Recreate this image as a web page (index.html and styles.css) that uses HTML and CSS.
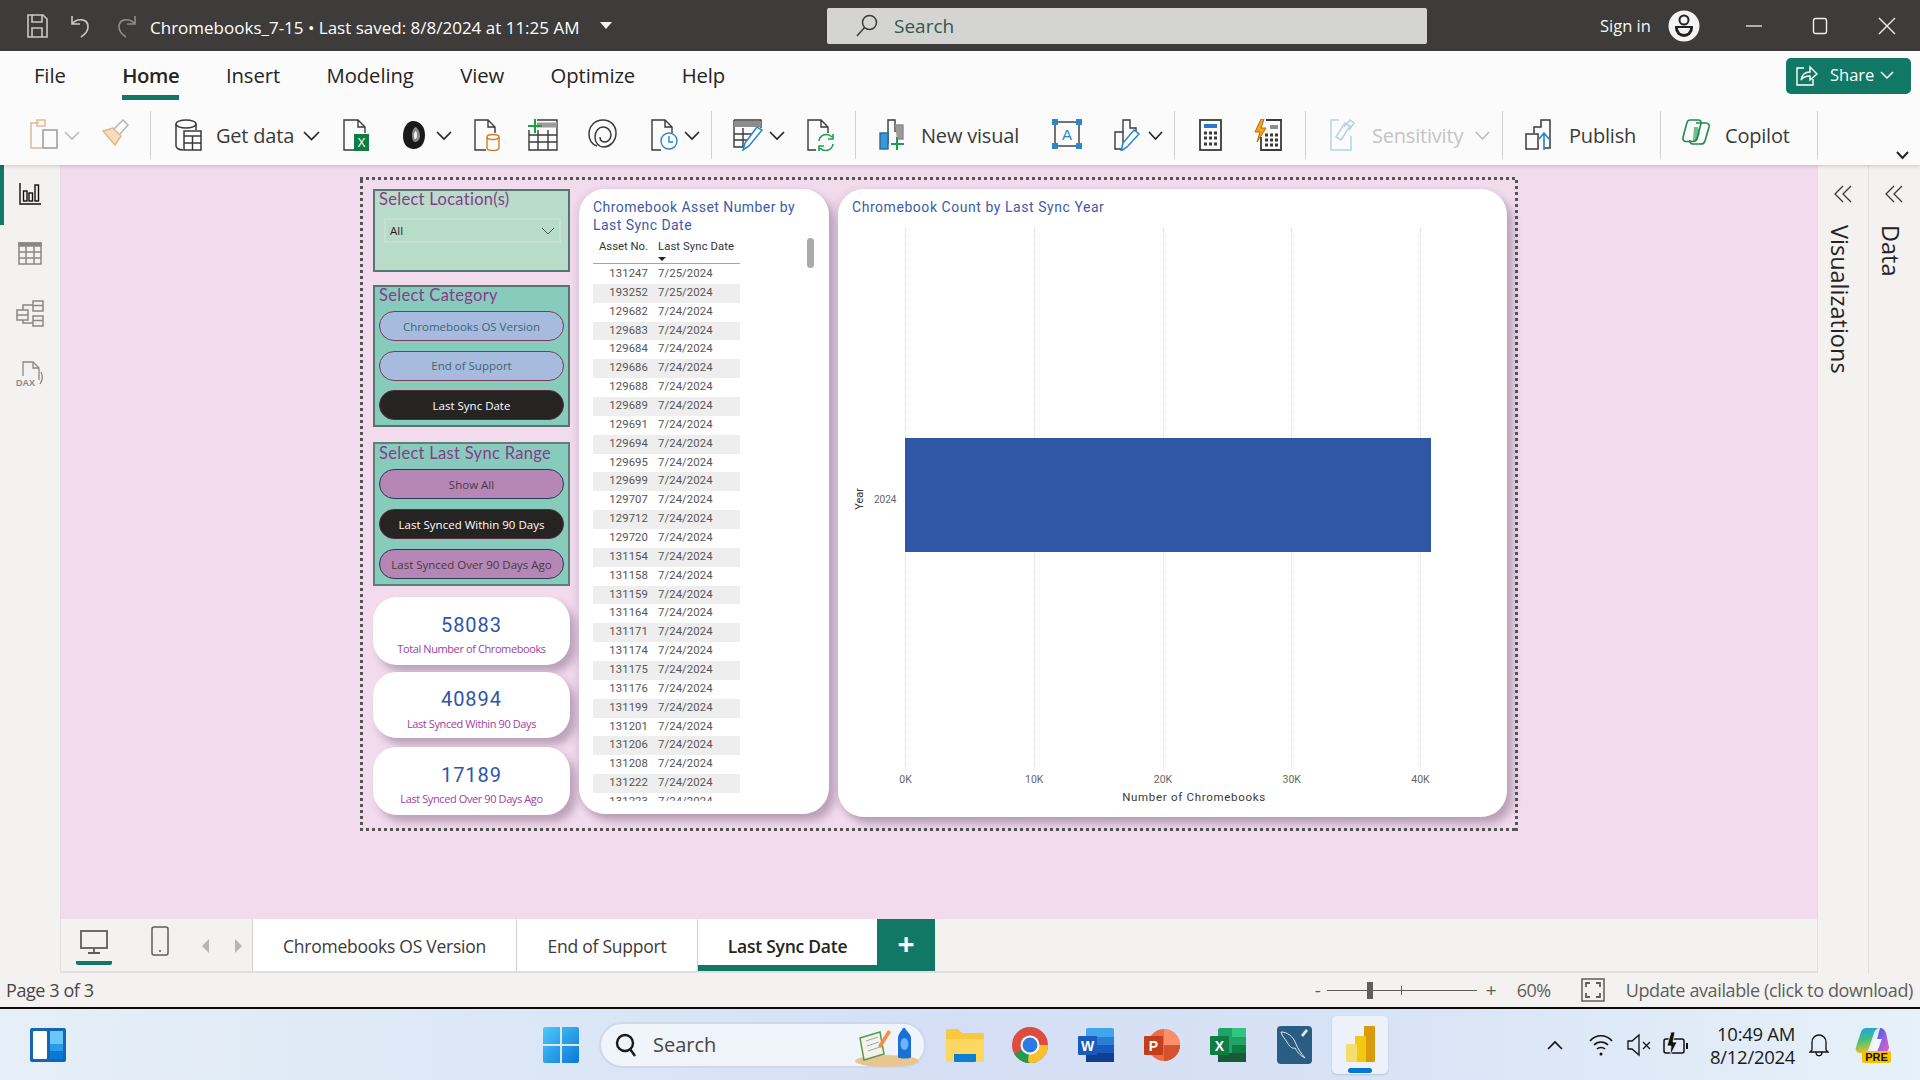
FILE: index.html
```html
<!DOCTYPE html>
<html lang="en">
<head>
<meta charset="utf-8">
<title>Power BI Desktop</title>
<link rel="stylesheet" href="styles.css">
</head>
<body>
<div class="app">
  <header class="titlebar">
    <svg class="ml27" width="21" height="24" viewBox="0 0 21 24" fill="none" stroke="#c8c8c8" stroke-width="1.6"><path d="M1 1h15l4 4v18H1z"/><path d="M5 1v7h10V1M5 23v-9h10v9"/></svg>
    <svg class="ml22" width="22" height="24" viewBox="0 0 22 24" fill="none" stroke="#c8c8c8" stroke-width="1.6"><path d="M2 2v8h8M2 10c5-6 16-6 16 3 0 5-4 8-7 10"/></svg>
    <svg class="ml23 dim" width="22" height="24" viewBox="0 0 22 24" fill="none" stroke="#8c8c8a" stroke-width="1.6"><path d="M20 2v8h-8M20 10c-5-6-16-6-16 3 0 5 4 8 7 10"/></svg>
    <span class="doc-title">Chromebooks_7-15 • Last saved: 8/8/2024 at 11:25 AM</span>
    <span class="caret-down"></span>
    <div class="searchbox">
      <svg width="24" height="24" viewBox="0 0 24 24" fill="none" stroke="#3b3a39" stroke-width="1.5"><circle cx="14.5" cy="8.5" r="7"/><path d="M9.5 13.5 2 22"/></svg>
      <span>Search</span>
    </div>
    <span class="signin">Sign in</span>
    <svg class="ml17" width="32" height="32" viewBox="0 0 32 32"><circle cx="16" cy="16" r="15.5" fill="#f4f4f4"/><circle cx="16" cy="10" r="4.5" fill="none" stroke="#222" stroke-width="2"/><path d="M7 16h18v2a9 9 0 0 1-18 0z" fill="#222"/><path d="M10 18h12a6 6 0 0 1-12 0z" fill="#f4f4f4"/></svg>
    <div class="winctl">
      <svg width="16" height="16" viewBox="0 0 16 16" stroke="#eee" stroke-width="1.3" fill="none"><path d="M0 8h16"/></svg>
      <svg width="16" height="18" viewBox="0 0 16 18" stroke="#eee" stroke-width="1.4" fill="none"><rect x="1.5" y="1.5" width="13" height="15" rx="2"/></svg>
      <svg width="18" height="18" viewBox="0 0 18 18" stroke="#eee" stroke-width="1.4" fill="none"><path d="M1 1l16 16M17 1 1 17"/></svg>
    </div>
  </header>

  <section class="ribbon">
    <nav class="tabs">
      <span class="tab first">File</span>
      <span class="tab active">Home</span>
      <span class="tab">Insert</span>
      <span class="tab">Modeling</span>
      <span class="tab">View</span>
      <span class="tab">Optimize</span>
      <span class="tab">Help</span>
      <button class="share">
        <svg width="24" height="24" viewBox="0 0 24 24" fill="none" stroke="#fff" stroke-width="1.4"><path d="M9 5H2v17h16v-6"/><path d="M6 17c1-6 5-8 9-8V4l7 7-7 6v-4c-4 0-7 1-9 4z"/></svg>
        <span>Share</span>
        <svg width="14" height="10" viewBox="0 0 14 10" fill="none" stroke="#fff" stroke-width="1.5"><path d="m1 2 6 6 6-6"/></svg>
      </button>
    </nav>
    <div class="tools">
      <svg class="ml30 dim4" width="28" height="30" viewBox="0 0 28 30" fill="none" stroke-width="1.5"><path d="M9 4H1v25h11" stroke="#e2b98c"/><rect x="7" y="1" width="8" height="6" stroke="#e2b98c"/><rect x="13" y="11" width="14" height="18" stroke="#9a9a9a"/></svg>
      <svg class="ml6 chev muted" width="16" height="10" viewBox="0 0 16 10"><path d="m1 1 7 7 7-7"/></svg>
      <svg class="ml20" width="30" height="30" viewBox="0 0 30 30" fill="none" stroke-width="1.5"><path d="M3 12 15 26l6-9-8-8z" fill="#f5dcc0" stroke="#e2b98c"/><path d="m14 10 9-9 5 5-8 9" stroke="#b5b5b5"/></svg>
      <i class="sep ml20"></i>
      <svg class="ml24" width="27" height="32" viewBox="0 0 27 32" fill="none" stroke="#3b3a39" stroke-width="1.5"><ellipse cx="11" cy="5" rx="10" ry="4"/><path d="M1 5v22c0 2 3 4 7 4M21 5v6"/><rect x="9" y="12" width="17" height="19" fill="#fff"/><path d="M9 17h17M9 24h17M17.500 17v14"/></svg>
      <span class="rt ml14 w80">Get data</span>
      <svg class="ml7 chev" width="17" height="10" viewBox="0 0 17 10"><path d="m1 1 7.500 7.500L16 1"/></svg>
      <svg class="ml23" width="27" height="32" viewBox="0 0 27 32" fill="none" stroke="#3b3a39" stroke-width="1.4"><path d="M11 31H1V1h14l7 7v6M15 1v7h7"/><rect x="11" y="15" width="15" height="17" fill="#107c41" stroke="none"/><text x="18.500" y="28" class="ic-txt" font-size="12" fill="#fff" stroke="none" text-anchor="middle">X</text></svg>
      <svg class="ml32" width="24" height="32" viewBox="0 0 24 32"><path d="M12 2c7 1 11 6 11 14 0 9-5 14-11 14C5 30 1 25 1 17 1 8 6 1 12 2z" fill="#1a1a1a"/><path d="M14 8c3 3 4 6 4 9s-2 6-5 6c-2 0-3-3-3-7s2-8 4-8z" fill="#8a8a8a"/><path d="M14 12c1 2 1 3 1 5s-1 3-2 3-1-2-1-4 1-4 2-4z" fill="#eee"/></svg>
      <svg class="ml10 chev" width="16" height="10" viewBox="0 0 16 10"><path d="m1 1 7 7 7-7"/></svg>
      <svg class="ml22" width="26" height="32" viewBox="0 0 26 32" fill="none" stroke-width="1.4"><path d="M12 31H1V1h13l7 7v6M14 1v7h7" stroke="#3b3a39"/><ellipse cx="19" cy="18" rx="6" ry="2.500" stroke="#d97a1d"/><path d="M13 18v11c0 1.500 3 2.500 6 2.500s6-1 6-2.500V18" stroke="#d97a1d"/></svg>
      <svg class="ml28" width="30" height="32" viewBox="0 0 30 32" fill="none" stroke="#3b3a39" stroke-width="1.4"><path d="M9 1h20v30H1V11"/><path d="M9 6h20" stroke="#9a9a9a" stroke-width="5"/><path d="M1 16h28M1 23h28M10 11v20M20 11v20"/><path d="M7 0v14M0 7h14" stroke="#1f9e4a" stroke-width="2"/></svg>
      <svg class="ml30" width="29" height="30" viewBox="0 0 29 30" fill="none" stroke="#3b3a39" stroke-width="1.5"><path d="M9 27C3 25 1 20 1 15 1 7 7 1 15 1s13 6 13 13c0 9-7 14-12 14-6 0-9-5-9-10 0-6 4-10 8-10s8 3 8 8c0 4-3 7-6 7s-5-2-5-5"/></svg>
      <svg class="ml34" width="27" height="32" viewBox="0 0 27 32" fill="none" stroke-width="1.4"><path d="M10 31H1V1h13l7 7v6M14 1v7h7" stroke="#3b3a39"/><circle cx="18" cy="22" r="8" stroke="#2b88c8"/><path d="M18 17v6h4" stroke="#2b88c8"/></svg>
      <svg class="ml6 chev" width="16" height="10" viewBox="0 0 16 10"><path d="m1 1 7 7 7-7"/></svg>
      <i class="sep ml11"></i>
      <svg class="ml21" width="30" height="32" viewBox="0 0 30 32" fill="none" stroke="#3b3a39" stroke-width="1.4"><path d="M1 1h27v8M1 1v27h12"/><path d="M1 5h27" stroke="#8c8c8c" stroke-width="6"/><path d="M1 15h18M1 21h13M10 9v19"/><path d="m10 31 2-7L24 8l5 3-13 16z" fill="#fff" stroke="#2b88c8" stroke-width="1.600"/></svg>
      <svg class="ml6 chev" width="16" height="10" viewBox="0 0 16 10"><path d="m1 1 7 7 7-7"/></svg>
      <svg class="ml22" width="28" height="32" viewBox="0 0 28 32" fill="none" stroke-width="1.4"><path d="M9 31H1V1h13l7 7v6M14 1v7h7" stroke="#3b3a39"/><path d="M12 22a7.500 7.500 0 0 1 13-4m1-3v5h-5" stroke="#1f9e4a" stroke-width="1.600"/><path d="M26 25a7.500 7.500 0 0 1-13 4m-1 3v-5h5" stroke="#1f9e4a" stroke-width="1.600"/></svg>
      <i class="sep ml20"></i>
      <svg class="ml23" width="26" height="32" viewBox="0 0 26 32" fill="none" stroke-width="1.4"><path d="M9 25V1h7v12" stroke="#3b3a39"/><path d="M16 6h8v14h-6" stroke="#8c8c8c" fill="#9a9a9a"/><rect x="1" y="14" width="8" height="16" fill="#3f95d8" stroke="#1d6aa8"/><path d="M18 18v13M12 25h13" stroke="#1f9e4a" stroke-width="2"/></svg>
      <span class="rt ml16 w99">New visual</span>
      <svg class="ml32" width="30" height="30" viewBox="0 0 30 30" fill="none"><rect x="3" y="3" width="24" height="24" stroke="#3b3a39" stroke-width="1.4"/><path d="M0 0h6v6H0zM24 0h6v6h-6zM0 24h6v6H0zM24 24h6v6h-6z" fill="#2b88c8"/><text x="15" y="21" class="ic-txt" font-size="15" fill="#2b88c8" text-anchor="middle">A</text></svg>
      <svg class="ml32" width="26" height="32" viewBox="0 0 26 32" fill="none" stroke-width="1.4"><path d="M8 30H1V13h8V1h7v8h6v6" stroke="#3b3a39"/><path d="M9 13v17" stroke="#3b3a39"/><path d="m7 32 2-8L20 11l5 4-12 13z" fill="#fff" stroke="#2b88c8" stroke-width="1.600"/></svg>
      <svg class="ml8 chev" width="15" height="10" viewBox="0 0 15 10"><path d="m1 1 6.500 7L14 1"/></svg>
      <i class="sep ml11"></i>
      <svg class="ml24" width="23" height="32" viewBox="0 0 23 32" fill="none" stroke="#3b3a39" stroke-width="1.800"><rect x="1" y="1" width="21" height="30"/><path d="M5 7h13" stroke="#2b78c8" stroke-width="4"/><path d="M5 14h3M10 14h3M15 14h3M5 19h3M10 19h3M15 19h3M5 25h3M10 25h3M15 25h3" stroke-width="3"/></svg>
      <svg class="ml32" width="28" height="32" viewBox="0 0 28 32" fill="none" stroke="#3b3a39" stroke-width="1.800"><path d="M12 1h15v30H7V18"/><path d="M16 8h8" stroke="#8c8c8c" stroke-width="4"/><path d="M11 16h3M16 16h3M21 16h3M11 21h3M16 21h3M21 21h3M11 26h3M16 26h3M21 26h3" stroke-width="3"/><path d="M7 0 1 13h5l-3 10 9-14H7l3-9z" fill="#f4a521" stroke="#c4620a" stroke-width="1"/></svg>
      <i class="sep ml23"></i>
      <svg class="ml24" width="25" height="32" viewBox="0 0 25 32" fill="none" stroke="#b6d3e6" stroke-width="1.500"><path d="M9 1H1v30h20V17"/><path d="m6 18 9-14 5 3-9 14z"/><path d="m14 8 6-7 4 3-5 7"/></svg>
      <span class="rt ml17 w93 off">Sensitivity</span>
      <svg class="ml10 chev muted" width="15" height="10" viewBox="0 0 15 10"><path d="m1 1 6.500 7L14 1"/></svg>
      <i class="sep ml12"></i>
      <svg class="ml22" width="27" height="32" viewBox="0 0 27 32" fill="none" stroke="#3b3a39" stroke-width="1.500"><path d="M9 14V8h7V1h9v28h-6"/><rect x="1" y="15" width="12" height="15"/><path d="M19 31V15m-5 5 5-6 5 6" stroke="#2b88c8" stroke-width="1.700"/></svg>
      <span class="rt ml17 w66">Publish</span>
      <i class="sep ml25"></i>
      <svg class="ml21" width="28" height="26" viewBox="0 0 28 26" fill="none" stroke="#1f8a4c" stroke-width="1.600"><path d="M12 8h4l2 6-3 8h-4z" fill="#6fbf8f" stroke="none"/><path d="M8 1h8c2.500 0 3.500 1.500 3 3.500l-4 15c-.5 2-2 3-4 3H4c-2.500 0-3.500-2-3-4L5 3.500C5.500 2 6.500 1 8 1z"/><path d="M14 4h10c2.500 0 3.500 2 3 4l-4 14c-.5 2-2 3-4 3h-8c-2.500 0-3.500-2-3-4"/></svg>
      <span class="rt ml15 w68">Copilot</span>
      <i class="sep ml24"></i>
      <svg class="collapse" width="13" height="9" viewBox="0 0 13 9" fill="none" stroke="#252423" stroke-width="2"><path d="m1 1 5.500 6L12 1"/></svg>
    </div>
  </section>

  <main class="workspace">
    <aside class="rail">
      <div class="rail-item on"><svg width="22" height="22" viewBox="0 0 22 22" fill="none" stroke="#111" stroke-width="1.400"><path d="M1 0v21h21"/><rect x="4.500" y="8" width="3.500" height="10"/><rect x="10" y="10" width="3.500" height="8"/><rect x="16" y="2" width="3.500" height="16"/></svg></div>
      <div class="rail-item"><svg width="24" height="24" viewBox="0 0 24 24" fill="none" stroke="#8a8886" stroke-width="1.500"><rect x="1" y="1" width="22" height="21"/><path d="M1 1h22v3H1z" fill="#8a8886"/><path d="M1 10h22M1 16h22M8 4v18M16 4v18"/></svg></div>
      <div class="rail-item"><svg width="28" height="28" viewBox="0 0 28 28" fill="none" stroke="#8a8886" stroke-width="1.500"><rect x="1" y="10" width="11" height="10"/><path d="M1 15h11"/><rect x="17" y="1" width="10" height="10"/><path d="M17 5.500h10"/><rect x="17" y="16" width="10" height="10"/><path d="M17 20.500h10M7 10V5h10M7 20v3h10"/></svg></div>
      <div class="rail-item"><svg width="28" height="28" viewBox="0 0 28 28" fill="none" stroke="#8a8886" stroke-width="1.300"><path d="M7 16V2h10l6 6v12"/><path d="M17 2v6h6M25 12c2 4 1 9-1 12"/><text x="0" y="26" class="ic-txt" font-size="9" fill="#8a8886" stroke="none" font-weight="700">DAX</text></svg></div>
    </aside>

    <div class="center">
      <div class="canvas">
        <div class="report">
          <div class="col-left">
            <section class="slicer loc">
              <h3>Select Location(s)</h3>
              <div class="dropdown"><span>All</span><svg width="14" height="8" viewBox="0 0 14 8" fill="none" stroke="#555" stroke-width="1"><path d="m1 1 6 6 6-6"/></svg></div>
            </section>
            <section class="slicer cat">
              <h3>Select Category</h3>
              <div class="pill blue">Chromebooks OS Version</div>
              <div class="pill blue">End of Support</div>
              <div class="pill black">Last Sync Date</div>
            </section>
            <section class="slicer range">
              <h3>Select Last Sync Range</h3>
              <div class="pill plum">Show All</div>
              <div class="pill black">Last Synced Within 90 Days</div>
              <div class="pill plum">Last Synced Over 90 Days Ago</div>
            </section>
            <section class="kpi k1"><b>58083</b><small>Total Number of Chromebooks</small></section>
            <section class="kpi k2"><b>40894</b><small>Last Synced Within 90 Days</small></section>
            <section class="kpi k3"><b>17189</b><small>Last Synced Over 90 Days Ago</small></section>
          </div>

          <section class="card table-card">
            <h2 class="vis-title">Chromebook Asset Number by<br>Last Sync Date</h2>
            <div class="thead"><span class="c-id">Asset No.</span><span class="c-date">Last Sync Date</span><i class="sort"></i></div>
            <div class="tbody">
              <div class="tr"><span class="c-id">131247</span><span class="c-date">7/25/2024</span></div>
              <div class="tr"><span class="c-id">193252</span><span class="c-date">7/25/2024</span></div>
              <div class="tr"><span class="c-id">129682</span><span class="c-date">7/24/2024</span></div>
              <div class="tr"><span class="c-id">129683</span><span class="c-date">7/24/2024</span></div>
              <div class="tr"><span class="c-id">129684</span><span class="c-date">7/24/2024</span></div>
              <div class="tr"><span class="c-id">129686</span><span class="c-date">7/24/2024</span></div>
              <div class="tr"><span class="c-id">129688</span><span class="c-date">7/24/2024</span></div>
              <div class="tr"><span class="c-id">129689</span><span class="c-date">7/24/2024</span></div>
              <div class="tr"><span class="c-id">129691</span><span class="c-date">7/24/2024</span></div>
              <div class="tr"><span class="c-id">129694</span><span class="c-date">7/24/2024</span></div>
              <div class="tr"><span class="c-id">129695</span><span class="c-date">7/24/2024</span></div>
              <div class="tr"><span class="c-id">129699</span><span class="c-date">7/24/2024</span></div>
              <div class="tr"><span class="c-id">129707</span><span class="c-date">7/24/2024</span></div>
              <div class="tr"><span class="c-id">129712</span><span class="c-date">7/24/2024</span></div>
              <div class="tr"><span class="c-id">129720</span><span class="c-date">7/24/2024</span></div>
              <div class="tr"><span class="c-id">131154</span><span class="c-date">7/24/2024</span></div>
              <div class="tr"><span class="c-id">131158</span><span class="c-date">7/24/2024</span></div>
              <div class="tr"><span class="c-id">131159</span><span class="c-date">7/24/2024</span></div>
              <div class="tr"><span class="c-id">131164</span><span class="c-date">7/24/2024</span></div>
              <div class="tr"><span class="c-id">131171</span><span class="c-date">7/24/2024</span></div>
              <div class="tr"><span class="c-id">131174</span><span class="c-date">7/24/2024</span></div>
              <div class="tr"><span class="c-id">131175</span><span class="c-date">7/24/2024</span></div>
              <div class="tr"><span class="c-id">131176</span><span class="c-date">7/24/2024</span></div>
              <div class="tr"><span class="c-id">131199</span><span class="c-date">7/24/2024</span></div>
              <div class="tr"><span class="c-id">131201</span><span class="c-date">7/24/2024</span></div>
              <div class="tr"><span class="c-id">131206</span><span class="c-date">7/24/2024</span></div>
              <div class="tr"><span class="c-id">131208</span><span class="c-date">7/24/2024</span></div>
              <div class="tr"><span class="c-id">131222</span><span class="c-date">7/24/2024</span></div>
              <div class="tr"><span class="c-id">131223</span><span class="c-date">7/24/2024</span></div>
            </div>
            <i class="scroll"></i>
          </section>

          <section class="card chart-card">
            <h2 class="vis-title">Chromebook Count by Last Sync Year</h2>
            <div class="chart-body">
              <div class="y-axis"><span class="y-title">Year</span><span class="y-tick">2024</span></div>
              <div class="plot-col">
                <div class="plot">
                  <i class="gl"></i><i class="gl"></i><i class="gl"></i><i class="gl"></i><i class="gl"></i>
                  <div class="bar"></div>
                </div>
                <div class="x-ticks"><span>0K</span><span>10K</span><span>20K</span><span>30K</span><span>40K</span></div>
                <div class="x-title">Number of Chromebooks</div>
              </div>
            </div>
          </section>
        </div>
      </div>

      <div class="pagebar">
        <div class="view-btns">
          <span class="view on"><svg width="28" height="24" viewBox="0 0 28 24" fill="none" stroke="#605e5c" stroke-width="1.800"><rect x="1" y="1" width="26" height="17"/><path d="M14 18v5M8 23h12"/></svg></span>
          <span class="view"><svg width="18" height="30" viewBox="0 0 18 30" fill="none" stroke="#605e5c" stroke-width="1.500"><rect x="1" y="1" width="16" height="28" rx="2"/><path d="M8 25h2"/></svg></span>
          <svg class="arrow" width="9" height="14" viewBox="0 0 9 14"><path d="M8 0v14L1 7z" fill="#b8b6b4"/></svg>
          <svg class="arrow a2" width="9" height="14" viewBox="0 0 9 14"><path d="M1 0v14l7-7z" fill="#b8b6b4"/></svg>
        </div>
        <div class="ptab t1">Chromebooks OS Version</div>
        <div class="ptab t2">End of Support</div>
        <div class="ptab t3">Last Sync Date</div>
        <div class="padd">+</div>
      </div>
    </div>

    <aside class="pane viz">
      <svg width="18" height="18" viewBox="0 0 18 18" fill="none" stroke="#3b3a39" stroke-width="1.300"><path d="M9 1 1 9l8 8M17 1 9 9l8 8"/></svg>
      <span>Visualizations</span>
    </aside>
    <aside class="pane data">
      <svg width="18" height="18" viewBox="0 0 18 18" fill="none" stroke="#3b3a39" stroke-width="1.300"><path d="M9 1 1 9l8 8M17 1 9 9l8 8"/></svg>
      <span>Data</span>
    </aside>
  </main>

  <footer class="status">
    <span class="pageno">Page 3 of 3</span>
    <span class="zm minus">-</span>
    <div class="slider"><i class="tick"></i><i class="thumb"></i></div>
    <span class="zm plus">+</span>
    <span class="pct">60%</span>
    <svg class="fit" width="24" height="24" viewBox="0 0 24 24" fill="none" stroke="#605e5c" stroke-width="1.500"><rect x="1" y="1" width="22" height="22"/><path d="M5 9V5h4M15 5h4v4M19 15v4h-4M9 19H5v-4" stroke-width="1.800"/></svg>
    <span class="update">Update available (click to download)</span>
  </footer>

  <footer class="taskbar">
    <svg class="tb-widgets" width="36" height="34" viewBox="0 0 36 34"><rect width="36" height="34" rx="2" fill="#1565b0"/><rect x="3" y="3" width="14" height="28" rx="1" fill="#fff"/><rect x="20" y="3" width="13" height="13" fill="#67c8f5"/><rect x="20" y="16" width="13" height="7" fill="#2b9be8"/><rect x="20" y="23" width="13" height="8" fill="#0a78d4"/></svg>
    <svg class="tb-start" width="36" height="36" viewBox="0 0 36 36"><defs><linearGradient id="win" x1="0" y1="0" x2="1" y2="1"><stop offset="0" stop-color="#4fc8f8"/><stop offset="1" stop-color="#0a78d8"/></linearGradient></defs><path d="M0 2a2 2 0 0 1 2-2h15v17H0zM19 0h15a2 2 0 0 1 2 2v15H19zM0 19h17v17H2a2 2 0 0 1-2-2zM19 19h17v15a2 2 0 0 1-2 2H19z" fill="url(#win)"/></svg>
    <div class="tb-search">
      <svg width="22" height="24" viewBox="0 0 22 24" fill="none" stroke="#1a1a1a" stroke-width="2.400"><circle cx="10" cy="10" r="8"/><path d="m15 16 5 7"/></svg>
      <span>Search</span>
      <svg class="doodle" width="66" height="44" viewBox="0 0 66 44"><ellipse cx="33" cy="37" rx="32" ry="6" fill="#e8c690"/><path d="M6 14 26 8l4 22-20 6z" fill="#f3f3ea" stroke="#5c9a4a" stroke-width="1.500"/><path d="M12 17l12-4M13 22l12-4M14 27l12-4" stroke="#9ab" stroke-width="1"/><path d="m24 22 10-16 3 2-10 16z" fill="#f09040"/><path d="M44 33V14c0-4 3-6 5-10h2c2 4 6 6 6 10v19c0 2-13 2-13 0z" fill="#1a6fd8"/><ellipse cx="50.500" cy="20" rx="4" ry="6" fill="#6cb4f4"/></svg>
    </div>
    <svg class="tb-ic ml20" width="38" height="34" viewBox="0 0 38 34"><path d="M0 3a2 2 0 0 1 2-2h10l4 4h20a2 2 0 0 1 2 2v25a2 2 0 0 1-2 2H2a2 2 0 0 1-2-2z" fill="#f7c93e"/><path d="M0 11h38v21a2 2 0 0 1-2 2H2a2 2 0 0 1-2-2z" fill="#fcd860"/><rect x="8" y="23" width="22" height="11" rx="1" fill="#0c7fd4"/><rect x="8" y="23" width="22" height="3" fill="#fcd860"/></svg>
    <svg class="tb-ic ml28" width="36" height="36" viewBox="0 0 36 36"><circle cx="18" cy="18" r="18" fill="#dd4c3e"/><path d="M18 18 2.400 27A18 18 0 0 0 24 35z" fill="#1f9e50"/><path d="M18 18h18A18 18 0 0 1 18 36l-2-2z" fill="#fbc02d"/><circle cx="18" cy="18" r="9.500" fill="#fff"/><circle cx="18" cy="18" r="7.500" fill="#2c7be5"/></svg>
    <svg class="tb-ic ml30" width="36" height="34" viewBox="0 0 36 34"><rect x="8" width="28" height="34" rx="2" fill="#41a5ee"/><rect x="8" y="9" width="28" height="8" fill="#2b7cd3"/><rect x="8" y="17" width="28" height="8" fill="#185abd"/><rect x="8" y="25" width="28" height="9" fill="#103f91"/><rect y="8" width="19" height="19" rx="1" fill="#185abd"/><text x="9.500" y="23" class="ic-txt" font-size="14" font-weight="700" fill="#fff" text-anchor="middle">W</text></svg>
    <svg class="tb-ic ml30" width="36" height="36" viewBox="0 0 36 36"><circle cx="20" cy="18" r="16" fill="#ed6c47"/><path d="M20 2a16 16 0 0 1 16 16H20z" fill="#ff8f6b"/><path d="M20 18h16a16 16 0 0 1-16 16z" fill="#d35230"/><rect y="9" width="19" height="19" rx="1" fill="#c43e1c"/><text x="9.500" y="24" class="ic-txt" font-size="14" font-weight="700" fill="#fff" text-anchor="middle">P</text></svg>
    <svg class="tb-ic ml30" width="36" height="34" viewBox="0 0 36 34"><rect x="8" width="28" height="34" rx="2" fill="#21a366"/><rect x="22" width="14" height="9" fill="#33c481"/><rect x="22" y="17" width="14" height="8" fill="#107c41"/><rect x="8" y="25" width="28" height="9" fill="#185c37"/><rect y="8" width="19" height="19" rx="1" fill="#107c41"/><text x="9.500" y="23" class="ic-txt" font-size="14" font-weight="700" fill="#fff" text-anchor="middle">X</text></svg>
    <svg class="tb-ic ml31" width="35" height="38" viewBox="0 0 35 38"><rect width="35" height="38" rx="4" fill="#2a5d82"/><path d="M4 6c6 0 12 4 15 12 2 5 5 9 9 14-6-3-8-7-10-10-3 1-6-2-8-6-2-3-5-6-6-10z" fill="none" stroke="#dfe8ee" stroke-width="1"/><path d="m24 9 5-6 2 2-5 6z" fill="#e6e6e6"/></svg>
    <div class="tb-active"><svg width="29" height="36" viewBox="0 0 29 36"><rect x="18" width="11" height="36" rx="1" fill="#d99b0b"/><rect x="9" y="10" width="11" height="26" rx="1" fill="#f2c811"/><rect y="18" width="11" height="18" rx="1" fill="#f5dc6e"/></svg><i></i></div>
    <svg class="ml-auto" width="16" height="10" viewBox="0 0 16 10" fill="none" stroke="#111" stroke-width="1.600"><path d="m1 9 7-7 7 7"/></svg>
    <svg class="ml26" width="24" height="24" viewBox="0 0 24 24" fill="none" stroke="#111" stroke-width="1.700"><path d="M1 8c6-7 16-7 22 0M5 12c4-4 10-4 14 0M8 16c2-2 6-2 8 0"/><circle cx="12" cy="21" r="1.500" fill="#111" stroke="none"/></svg>
    <svg class="ml14" width="24" height="24" viewBox="0 0 24 24" fill="none" stroke="#111" stroke-width="1.300"><path d="M1 8h4l7-6v20l-7-6H1z"/><path d="m16 9 7 7m0-7-7 7"/></svg>
    <svg class="ml12" width="26" height="26" viewBox="0 0 26 26" fill="none" stroke="#111" stroke-width="1.500"><rect x="1" y="7" width="20" height="14" rx="2"/><path d="M24 11v6" stroke-width="2"/><path d="M8 0 4 14h4l-1 10 7-14h-4l2-10z" fill="#111" stroke="#eaf1f8" stroke-width=".8"/></svg>
    <div class="clock"><span>10:49 AM</span><span>8/12/2024</span></div>
    <svg class="ml14" width="20" height="24" viewBox="0 0 20 24" fill="none" stroke="#111" stroke-width="1.300"><path d="M3 17V9a7 7 0 0 1 14 0v8l2 2H1z"/><path d="M7 19c0 5 6 5 6 0"/></svg>
    <svg class="ml26 tb-last" width="36" height="36" viewBox="0 0 36 36"><defs><linearGradient id="cop" x1=".2" y1="0" x2=".4" y2="1"><stop offset="0" stop-color="#1f9fe8"/><stop offset=".5" stop-color="#47c27a"/><stop offset="1" stop-color="#f2c01e"/></linearGradient><linearGradient id="cop2" x1="0" y1="0" x2="1" y2="1"><stop offset="0" stop-color="#2a62d8"/><stop offset=".55" stop-color="#9a60e8"/><stop offset="1" stop-color="#f060b0"/></linearGradient></defs><path d="M11 1h14c-3 0-5 2-6 5l-5 15c-1 3-3 5-6 5H5c-3 0-5-3-4-6L6 5c1-3 3-4 5-4z" fill="url(#cop)"/><path d="M25 1c3 0 5 2 6 5l3 14c0 3-2 5-5 5h-9c2-1 3-3 4-5l3-8h-5l1-3c1-4 2-8 2-8z" fill="url(#cop2)"/><path d="M19 12h7l-4 13h-7z" fill="#f4f6fb"/><rect x="7" y="24" width="29" height="12" rx="2" fill="#f7c200"/><text x="21.500" y="34" class="ic-txt" font-size="11" font-weight="700" fill="#111" text-anchor="middle">PRE</text></svg>
  </footer>
</div>
</body>
</html>
```

FILE: styles.css
```css
* { box-sizing: border-box; }
html, body { margin: 0; height: 100%; overflow: hidden; }
body { font-family: "Open Sans", "Noto Sans", sans-serif; color: #252423; background: #f3f2f1; }
svg { flex: none; display: block; }
i { display: block; font-style: normal; }
h2, h3 { margin: 0; font-weight: 400; }

.app { width: 1920px; height: 1080px; display: grid; grid-template-rows: 51px 114px 808px 34px 73px; }

.ml6 { margin-left: 6px; } .ml7 { margin-left: 7px; } .ml8 { margin-left: 8px; }
.ml10 { margin-left: 10px; } .ml11 { margin-left: 11px; } .ml12 { margin-left: 12px; }
.ml14 { margin-left: 14px; } .ml15 { margin-left: 15px; } .ml16 { margin-left: 16px; }
.ml17 { margin-left: 17px; } .ml20 { margin-left: 20px; } .ml21 { margin-left: 21px; }
.ml22 { margin-left: 22px; } .ml23 { margin-left: 23px; } .ml24 { margin-left: 24px; }
.ml25 { margin-left: 25px; } .ml26 { margin-left: 26px; } .ml27 { margin-left: 27px; }
.ml28 { margin-left: 28px; } .ml30 { margin-left: 30px; } .ml31 { margin-left: 31px; }
.ml32 { margin-left: 32px; } .ml34 { margin-left: 34px; } .ml-auto { margin-left: auto; }
.ic-txt { font-family: "Liberation Sans", sans-serif; }

/* title bar */
.titlebar { background: #3d3c3a; display: flex; align-items: center; color: #fff; }
.doc-title { margin-left: 13px; font-size: 17px; width: 440px; white-space: nowrap; padding-top: 3px; }
.caret-down { margin-left: 10px; width: 0; height: 0; border: 6px solid transparent; border-top: 7px solid #f3f3f3; border-bottom: 0; }
.searchbox { margin-left: 215px; width: 600px; height: 36px; background: #d4d4d2; border-radius: 2px; display: flex; align-items: center; padding-left: 28px; gap: 15px; color: #35564f; font-size: 19px; }
.signin { margin-left: 173px; font-size: 16.500px; color: #f5f5f5; }
.winctl { margin-left: 46px; display: flex; align-items: center; gap: 50px; }

/* ribbon */
.ribbon { background: #fbfbfb; position: relative; z-index: 2; box-shadow: 0 1px 4px rgba(0,0,0,.18); }
.tabs { height: 49px; display: flex; align-items: center; gap: 46.500px; padding-left: 34px; position: relative; }
.tab { font-size: 20.300px; line-height: 46px; height: 47px; letter-spacing: -.1px; }
.tab.first { margin-right: 10px; }
.tab.active { font-weight: 600; border-bottom: 5px solid #117865; height: 48px; margin-top: 1px; letter-spacing: -.35px; }
.share { margin-left: auto; margin-right: 9px; width: 125px; height: 36px; background: #117865; border: 0; border-radius: 5px; color: #fff; font: 16.500px "Open Sans", sans-serif; display: flex; align-items: center; padding: 0 0 2px 9px; gap: 11px; }
.share span { margin-right: -5px; }
.tools { height: 65px; padding-top: 11px; display: flex; align-items: flex-start; position: relative; }
.tools > svg { margin-top: 8px; }
.tools > .chev { margin-top: 20px; }
.chev { fill: none; stroke: #252423; stroke-width: 1.600; }
.chev.muted { stroke: #bdbdbd; }
.sep { width: 1px; height: 48px; background: #d2d0ce; flex: none; }
.rt { font-size: 20px; line-height: 50px; white-space: nowrap; flex: none; letter-spacing: -.2px; color: #3b3a39; }
.rt.off { color: #c4c4c4; }
.w66 { width: 66px; } .w68 { width: 68px; } .w80 { width: 80px; } .w93 { width: 93px; } .w99 { width: 99px; }
.tools > .collapse { margin: 0; position: absolute; right: 11px; bottom: 5px; }

/* workspace */
.workspace { display: flex; min-height: 0; }
.rail { width: 61px; flex: none; background: #f3f2f1; border-right: 1px solid #e1dfdd; display: flex; flex-direction: column; }
.rail-item { height: 60px; display: flex; align-items: center; justify-content: center; padding-bottom: 2px; }
.rail-item.on { border-left: 4px solid #117865; padding-right: 4px; }
.center { width: 1756px; flex: none; display: flex; flex-direction: column; }
.canvas { height: 754px; background: #f2dbed; padding: 12px 0 0 299px; overflow: hidden; }

.report {
  width: 1158px; height: 654px; padding: 12px 0 0 13px;
  display: grid; grid-template-columns: 197px 250px 669px; column-gap: 9px; align-items: start;
  background:
    repeating-linear-gradient(90deg, #555 0 3px, transparent 3px 6px) left top / 100% 3px no-repeat,
    repeating-linear-gradient(90deg, #555 0 3px, transparent 3px 6px) left bottom / 100% 3px no-repeat,
    repeating-linear-gradient(0deg, #555 0 3px, transparent 3px 6px) left top / 3px 100% no-repeat,
    repeating-linear-gradient(0deg, #555 0 3px, transparent 3px 6px) right top / 3px 100% no-repeat;
}
.col-left { display: flex; flex-direction: column; }
.slicer { border: 2px solid #55756e; padding: 0 4px; }
.slicer h3 { font: 16.500px/19px "Lato", "Noto Sans", sans-serif; color: #8a3a8c; margin: 0; letter-spacing: .3px; }
.loc h3, .cat h3 { margin: -1px 0 1px; }
.loc { height: 83px; background: #b8dbca; }
.cat { height: 142px; margin-top: 13px; background: #87cbbd; }
.range { height: 144px; margin-top: 15px; background: #87cbbd; border-color: #5f7f78; }
.dropdown { margin: 9px 0 0 5px; width: 177px; height: 25px; border: 2px solid #c6e0d3; display: flex; align-items: center; justify-content: space-between; padding: 0 4px 0 4px; font: 11.500px "Open Sans", sans-serif; color: #222; }
.pill { height: 30px; width: 185px; border-radius: 15px; display: flex; align-items: center; justify-content: center; font: 11.500px "Open Sans", sans-serif; margin-bottom: 10px; white-space: nowrap; letter-spacing: 0; }
.cat .pill { margin-bottom: 9.500px; }
.slicer h3 + .pill { margin-top: 6px; }
.blue { background: #a7bbde; border: 1px solid #7a3a5a; color: #3f6470; }
.plum { background: #b686b5; border: 1px solid #2c3b50; color: #453a48; }
.black { background: #252423; border: 1px solid #5a2a3a; color: #fff; }
.kpi { background: #fff; border-radius: 24px; box-shadow: 6px 7px 9px rgba(70,40,70,.32); display: flex; flex-direction: column; align-items: center; }
.kpi b { font: 400 20px/24px "Roboto", sans-serif; color: #2f55a4; letter-spacing: 1px; margin-top: 16px; }
.kpi small { font: 11px/16px "Open Sans", sans-serif; color: #a03ea0; margin-top: 4px; letter-spacing: -.4px; white-space: nowrap; }
.k1 { height: 68px; margin-top: 11px; }
.k2 { height: 66px; margin-top: 7px; }
.k2 b { margin-top: 15px; }
.k2 small { margin-top: 5px; }
.k3 { height: 68px; margin-top: 9px; }

.card { background: #fff; border-radius: 26px; box-shadow: 6px 7px 9px rgba(70,40,70,.32), -4px 0 6px rgba(70,40,70,.08); position: relative; }
.vis-title { font: 400 14px/18px "Roboto", sans-serif; color: #3d5ba8; letter-spacing: .45px; }
.table-card { height: 625px; padding: 9px 0 0 14px; }
.thead { display: flex; height: 28px; margin-top: 2px; width: 147px; border-bottom: 1px solid #8fa5d8; font: 11.300px/22px "Roboto", sans-serif; color: #333; position: relative; }
.c-id { width: 55px; text-align: right; flex: none; }
.c-date { margin-left: 10px; white-space: nowrap; letter-spacing: .1px; }
.sort { position: absolute; left: 65px; top: 21px; width: 0; height: 0; border: 4px solid transparent; border-top: 4px solid #222; border-bottom: 0; }
.tbody { height: 537px; padding-top: 1px; overflow: hidden; width: 147px; font: 11.300px/18.860px "Roboto", sans-serif; color: #555; }
.tr { height: 18.860px; display: flex; white-space: nowrap; letter-spacing: .1px; }
.tr:nth-child(even) { background: #eee; }
.scroll { position: absolute; right: 15px; top: 49px; width: 7px; height: 30px; background: #aaa; border-radius: 4px; }

.chart-card { height: 628px; padding: 9px 0 0 14px; }
.chart-card .vis-title { letter-spacing: .55px; }
.chart-body { display: flex; margin-top: 12px; }
.y-axis { width: 53px; height: 542px; display: flex; align-items: center; flex: none; }
.y-title { writing-mode: vertical-rl; transform: rotate(180deg); font: 11px "Roboto", sans-serif; color: #333; margin-left: 1px; }
.y-tick { font: 10px "Roboto", sans-serif; color: #666; margin-left: 8px; }
.plot-col { display: flex; flex-direction: column; }
.plot { width: 516px; height: 542px; display: flex; justify-content: space-between; position: relative; }
.gl { width: 0; border-left: 1px dotted #d8d8d8; }
.bar { position: absolute; left: 0; top: 210px; width: 526px; height: 114px; background: #3057a6; }
.x-ticks { width: 516px; display: flex; justify-content: space-between; font: 10.500px/14px "Roboto", sans-serif; color: #666; margin-top: 3px; }
.x-ticks span { width: 1px; display: flex; justify-content: center; white-space: nowrap; }
.x-title { width: 578px; text-align: center; font: 11.500px/14px "Roboto", sans-serif; color: #3a3a3a; margin-top: 3px; letter-spacing: .7px; }

/* page bar */
.pagebar { height: 54px; background: #f3f2f1; border-bottom: 2px solid #e1dfdd; display: flex; }
.view-btns { width: 192px; flex: none; display: flex; align-items: flex-start; border-right: 1px solid #d2d0ce; }
.view { display: flex; justify-content: center; }
.view.on { width: 36px; margin-left: 15px; height: 46px; padding-top: 11px; border-bottom: 4px solid #117865; border-radius: 0 0 2px 2px; }
.view:not(.on) { margin-left: 39px; margin-top: 7px; }
.arrow { margin-left: 32px; margin-top: 20px; }
.arrow.a2 { margin-left: 24px; }
.ptab { background: #fff; height: 52px; display: flex; align-items: center; justify-content: center; font-size: 17.500px; letter-spacing: -.25px; color: #3b3a39; flex: none; border-right: 1px solid #d2d0ce; padding-top: 2px; }
.t1 { width: 264px; }
.t2 { width: 181px; }
.t3 { width: 179px; border-right: 0; border-bottom: 6px solid #117865; font-weight: 600; color: #252423; padding-top: 8px; }
.padd { width: 58px; height: 52px; background: #117865; color: #fff; font: 700 30px/50px "Open Sans", sans-serif; text-align: center; }

/* side panes */
.pane { flex: none; background: #f3f2f1; border-left: 1px solid #e1dfdd; display: flex; flex-direction: column; padding: 20px 0 0 16px; font-size: 23.500px; color: #252423; }
.pane span { writing-mode: vertical-rl; align-self: flex-start; margin: 22px 0 0 -10px; line-height: 32px; }
.viz { width: 51px; }
.data { width: 52px; }

/* status */
.status { background: #f3f2f1; display: flex; align-items: center; font-size: 18px; color: #605e5c; position: relative; }
.pageno { margin-left: 6px; color: #484644; letter-spacing: -.42px; width: 92px; white-space: nowrap; }
.zm { font-size: 19px; line-height: 20px; }
.minus { margin-left: auto; }
.slider { width: 150px; height: 1px; background: #605e5c; margin-left: 6px; position: relative; }
.thumb { position: absolute; left: 40px; top: -8px; width: 6px; height: 17px; background: #605e5c; }
.tick { position: absolute; left: 74px; top: -4px; width: 1px; height: 9px; background: #605e5c; }
.plus { margin-left: 9px; }
.pct { margin-left: 20px; width: 44px; letter-spacing: -.5px; }
.fit { margin-left: 20px; }
.update { margin-left: 21px; margin-right: 7px; letter-spacing: -.38px; white-space: nowrap; }

/* taskbar */
.taskbar { border-top: 2px solid #0c0c0c; display: flex; align-items: center; background: linear-gradient(90deg, #e6eff7 0%, #dbe6f6 30%, #d4dff5 50%, #d8e2f6 70%, #e6f1f9 100%); }
.tb-widgets { margin-left: 30px; }
.tb-start { margin-left: 477px; }
.tb-search { margin-left: 20px; width: 327px; height: 46px; border-radius: 23px; background: #f0f4fb; border: 2px solid #cfd8e8; display: flex; align-items: center; padding-left: 14px; gap: 16px; font-size: 20px; color: #484644; position: relative; }
.doodle { position: absolute; right: 4px; top: 0; }
.tb-active { margin-left: 20px; width: 56px; height: 58px; background: #edf1fa; border-radius: 5px; display: flex; flex-direction: column; align-items: center; padding-top: 10px; box-shadow: 0 1px 2px rgba(0,0,0,.15); }
.tb-active i { width: 24px; height: 5px; margin-top: 6px; border-radius: 3px; background: #0078d4; }
.clock { margin-left: 11px; width: 95px; display: flex; flex-direction: column; align-items: flex-end; font-size: 18.500px; line-height: 23px; color: #1a1a1a; letter-spacing: -.3px; white-space: nowrap; }
.tb-last { margin-right: 29px; }
```
